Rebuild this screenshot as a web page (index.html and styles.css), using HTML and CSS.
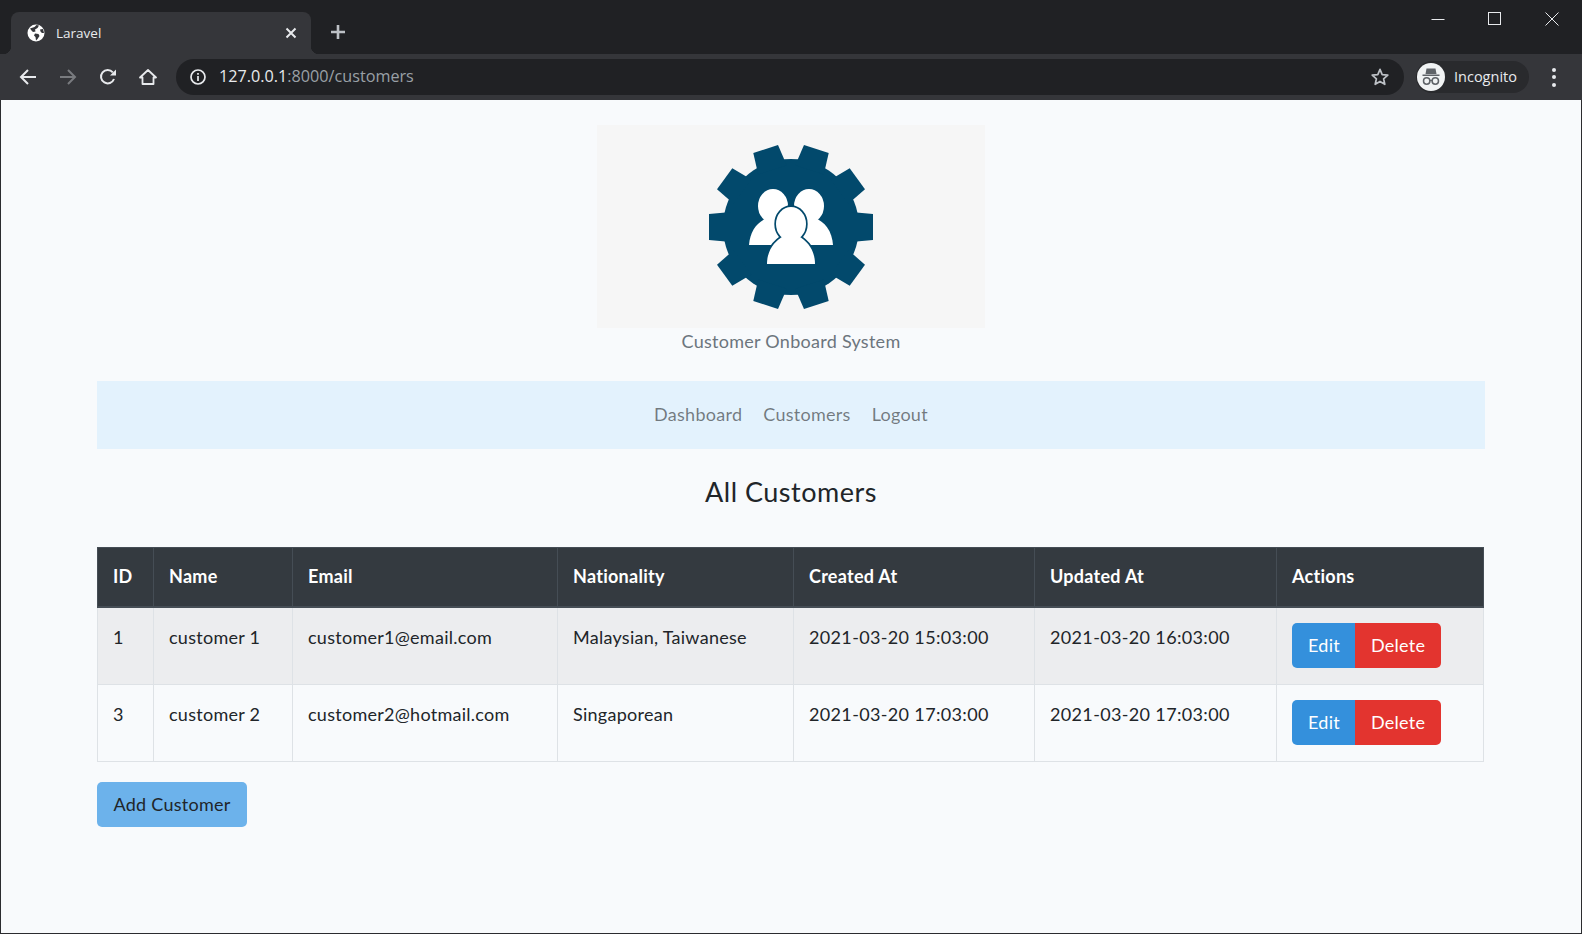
FILE: index.html
```html
<!DOCTYPE html>
<html lang="en">
<head>
    <meta charset="UTF-8">
    <title>Laravel</title>
    <link rel="stylesheet" href="styles.css">
</head>
<body>
<div class="window">

    <div class="tabstrip">
        <div class="tab">
            <svg class="globe" width="18" height="18" viewBox="0 0 18 18">
                <circle cx="9" cy="9" r="8.5" fill="#fff"/>
                <path d="M3 4.5 L7.5 3 L9.5 1 L12 1.5 L10.5 4 L8 5.5 L8.5 7.5 L6 8 L4.5 6.5 Z M8 9.5 L11.5 10 L12.5 12 L10.5 15 L9 16.5 L8.5 13 L7 11.5 Z M13 5.5 L16 5 L17 9 L15 9 L13.5 7.5 Z" fill="#35363a"/>
            </svg>
            <span class="tab-title">Laravel</span>
            <svg class="tab-close" width="12" height="12" viewBox="0 0 12 12">
                <path d="M1.5 1.5 L10.5 10.5 M10.5 1.5 L1.5 10.5" stroke="#e8eaed" stroke-width="2"/>
            </svg>
        </div>
        <svg class="newtab" width="16" height="16" viewBox="0 0 16 16">
            <path d="M8 1 V15 M1 8 H15" stroke="#bdc1c6" stroke-width="2.6"/>
        </svg>
        <div class="spacer"></div>
        <div class="winbtn">
            <svg width="14" height="14" viewBox="0 0 14 14"><path d="M0.5 7.5 H13.5" stroke="#e8eaed" stroke-width="1"/></svg>
        </div>
        <div class="winbtn">
            <svg width="14" height="14" viewBox="0 0 14 14"><rect x="0.5" y="0.5" width="12" height="12" fill="none" stroke="#e8eaed" stroke-width="1"/></svg>
        </div>
        <div class="winbtn">
            <svg width="14" height="14" viewBox="0 0 14 14"><path d="M0.5 0.5 L13.5 13.5 M13.5 0.5 L0.5 13.5" stroke="#e8eaed" stroke-width="1"/></svg>
        </div>
    </div>

    <div class="toolbar">
        <div class="toolbtn">
            <svg width="18" height="18" viewBox="0 0 18 18"><path d="M17 9 H2 M9 2 L2 9 L9 16" fill="none" stroke="#e8eaed" stroke-width="2"/></svg>
        </div>
        <div class="toolbtn">
            <svg width="18" height="18" viewBox="0 0 18 18"><path d="M1 9 H16 M9 2 L16 9 L9 16" fill="none" stroke="#797b7f" stroke-width="2"/></svg>
        </div>
        <div class="toolbtn">
            <svg width="18" height="18" viewBox="0 0 18 18">
                <path d="M15 11 A6.7 6.7 0 1 1 13.8 4.3" fill="none" stroke="#e8eaed" stroke-width="2"/>
                <path d="M11 7.5 H17 V1.5 Z" fill="#e8eaed"/>
            </svg>
        </div>
        <div class="toolbtn">
            <svg width="18" height="18" viewBox="0 0 18 18"><path d="M9 2 L17 9.5 H14.5 V16 H3.5 V9.5 H1 Z" fill="none" stroke="#e8eaed" stroke-width="1.8" stroke-linejoin="round"/></svg>
        </div>
        <div class="omnibox">
            <svg class="info" width="16" height="16" viewBox="0 0 16 16">
                <circle cx="8" cy="8" r="7" fill="none" stroke="#e8eaed" stroke-width="1.7"/>
                <path d="M8 7 V12 M8 4 V5.8" stroke="#e8eaed" stroke-width="1.7"/>
            </svg>
            <span class="url"><span class="url-host">127.0.0.1</span>:8000/customers</span>
            <svg class="star" width="20" height="20" viewBox="0 0 20 20">
                <path d="M10 2.4 L12.2 7.6 L17.8 8.1 L13.6 11.8 L14.8 17.3 L10 14.4 L5.2 17.3 L6.4 11.8 L2.2 8.1 L7.8 7.6 Z" fill="none" stroke="#bdc1c6" stroke-width="1.7" stroke-linejoin="round"/>
            </svg>
        </div>
        <div class="profile">
            <div class="avatar">
                <svg width="24" height="24" viewBox="0 0 24 24">
                    <path d="M7.5 3.5 H16.5 L17.5 9 H6.5 Z M3.5 9.5 H20.5 V11 H3.5 Z" fill="#5f6368"/>
                    <circle cx="7.7" cy="16" r="3.2" fill="none" stroke="#5f6368" stroke-width="1.5"/>
                    <circle cx="16.3" cy="16" r="3.2" fill="none" stroke="#5f6368" stroke-width="1.5"/>
                    <path d="M10.8 15.5 H13.2" stroke="#5f6368" stroke-width="1.3"/>
                </svg>
            </div>
            <span class="profile-name">Incognito</span>
        </div>
        <div class="menu-dots">
            <span></span><span></span><span></span>
        </div>
    </div>

    <div class="page">
        <div class="brand">
            <div class="logo">
                <svg width="164" height="164" viewBox="-82 -82 164 164">
                    <defs>
                        <polygon id="tooth" points="60,-15 82,-13 82,13 60,15"/>
                    </defs>
                    <g fill="#02496c">
                        <circle r="68"/>
                        <use href="#tooth"/>
                        <use href="#tooth" transform="rotate(36)"/>
                        <use href="#tooth" transform="rotate(72)"/>
                        <use href="#tooth" transform="rotate(108)"/>
                        <use href="#tooth" transform="rotate(144)"/>
                        <use href="#tooth" transform="rotate(180)"/>
                        <use href="#tooth" transform="rotate(216)"/>
                        <use href="#tooth" transform="rotate(252)"/>
                        <use href="#tooth" transform="rotate(288)"/>
                        <use href="#tooth" transform="rotate(324)"/>
                    </g>
                    <g fill="#fff">
                        <ellipse cx="-18" cy="-21" rx="15" ry="17"/>
                        <ellipse cx="18" cy="-21" rx="15" ry="17"/>
                        <path d="M-42 18 C-41 4 -34 -5 -24 -9 H-12 C-2 -5 5 4 6 18 Z"/>
                        <path d="M42 18 C41 4 34 -5 24 -9 H12 C2 -5 -5 4 -6 18 Z"/>
                    </g>
                    <g fill="#02496c" stroke="#02496c" stroke-width="3.4">
                        <ellipse cx="0" cy="-3" rx="15" ry="17"/>
                        <path d="M-24 37 C-24 24 -17 14 -7 9 H7 C17 14 24 24 24 37 Z"/>
                    </g>
                    <g fill="#fff">
                        <ellipse cx="0" cy="-3" rx="15" ry="17"/>
                        <path d="M-24 37 C-24 24 -17 14 -7 9 H7 C17 14 24 24 24 37 Z"/>
                    </g>
                </svg>
            </div>
            <div class="tagline">Customer Onboard System</div>
        </div>

        <nav class="navbar">
            <a class="nav-link" href="#">Dashboard</a>
            <a class="nav-link" href="#">Customers</a>
            <a class="nav-link" href="#">Logout</a>
        </nav>

        <h3 class="page-title">All Customers</h3>

        <table class="table">
            <colgroup>
                <col class="col-id">
                <col class="col-name">
                <col class="col-email">
                <col class="col-nation">
                <col class="col-date">
                <col class="col-date2">
                <col>
            </colgroup>
            <thead>
                <tr>
                    <th>ID</th>
                    <th>Name</th>
                    <th>Email</th>
                    <th>Nationality</th>
                    <th>Created At</th>
                    <th>Updated At</th>
                    <th>Actions</th>
                </tr>
            </thead>
            <tbody>
                <tr class="odd">
                    <td>1</td>
                    <td>customer 1</td>
                    <td>customer1@email.com</td>
                    <td>Malaysian, Taiwanese</td>
                    <td class="date">2021-03-20 15:03:00</td>
                    <td class="date">2021-03-20 16:03:00</td>
                    <td>
                        <div class="btn-group">
                            <a class="btn btn-edit" href="#">Edit</a>
                            <a class="btn btn-delete" href="#">Delete</a>
                        </div>
                    </td>
                </tr>
                <tr>
                    <td>3</td>
                    <td>customer 2</td>
                    <td>customer2@hotmail.com</td>
                    <td>Singaporean</td>
                    <td class="date">2021-03-20 17:03:00</td>
                    <td class="date">2021-03-20 17:03:00</td>
                    <td>
                        <div class="btn-group">
                            <a class="btn btn-edit" href="#">Edit</a>
                            <a class="btn btn-delete" href="#">Delete</a>
                        </div>
                    </td>
                </tr>
            </tbody>
        </table>

        <a class="btn btn-add" href="#">Add Customer</a>
    </div>
</div>
</body>
</html>
```

FILE: styles.css
```css
* {
    box-sizing: border-box;
}
body {
    margin: 0;
    font-family: Lato, "Noto Sans", sans-serif;
    font-size: 18px;
    line-height: 1.6;
    letter-spacing: 0.27px;
    color: #212529;
}
a {
    text-decoration: none;
}
.window {
    height: 934px;
    display: flex;
    flex-direction: column;
    overflow: hidden;
}

/* browser chrome */
.tabstrip {
    height: 54px;
    flex: none;
    display: flex;
    align-items: flex-start;
    padding: 0 2px 0 11px;
    letter-spacing: 0;
    background: #202124;
}
.tab {
    position: relative;
    width: 300px;
    height: 42px;
    margin-top: 12px;
    padding: 0 14px 0 16px;
    display: flex;
    align-items: center;
    background: #35363a;
    border-radius: 8px 8px 0 0;
}
.tab::before,
.tab::after {
    content: "";
    position: absolute;
    bottom: 0;
    width: 8px;
    height: 8px;
}
.tab::before {
    left: -8px;
    background: radial-gradient(circle at 0 0, #202124 8px, #35363a 8.5px);
}
.tab::after {
    right: -8px;
    background: radial-gradient(circle at 100% 0, #202124 8px, #35363a 8.5px);
}
.globe {
    flex: none;
}
.tab-title {
    flex: 1;
    margin-left: 11px;
    font-family: "Open Sans", sans-serif;
    font-size: 13.5px;
    line-height: 18px;
    color: #e8eaed;
}
.newtab {
    margin: 24px 0 0 19px;
}
.spacer {
    flex: 1;
}
.winbtn {
    width: 57px;
    height: 38px;
    display: flex;
    align-items: center;
    justify-content: center;
}
.toolbar {
    height: 46px;
    flex: none;
    display: flex;
    align-items: center;
    padding: 0 4px 0 8px;
    letter-spacing: 0;
    background: #35363a;
}
.toolbtn {
    width: 40px;
    height: 36px;
    display: flex;
    align-items: center;
    justify-content: center;
}
.omnibox {
    flex: 1;
    height: 36px;
    margin-left: 8px;
    padding: 0 14px;
    display: flex;
    align-items: center;
    background: #202124;
    border-radius: 18px;
}
.url {
    flex: 1;
    margin-left: 13px;
    font-family: "Open Sans", sans-serif;
    font-size: 16.2px;
    color: #9aa0a6;
}
.url-host {
    color: #e8eaed;
}
.profile {
    width: 113px;
    height: 32px;
    margin-left: 12px;
    padding-left: 1px;
    display: flex;
    align-items: center;
    background: #292a2d;
    border-radius: 16px;
}
.avatar {
    width: 28px;
    height: 28px;
    display: flex;
    align-items: center;
    justify-content: center;
    background: #f1f3f4;
    border-radius: 50%;
}
.profile-name {
    margin-left: 9px;
    font-family: "Open Sans", sans-serif;
    font-size: 14.5px;
    color: #e8eaed;
}
.menu-dots {
    width: 49px;
    display: flex;
    flex-direction: column;
    align-items: center;
    gap: 3.5px;
}
.menu-dots span {
    width: 4px;
    height: 4px;
    background: #e8eaed;
    border-radius: 50%;
}

/* page */
.page {
    flex: 1;
    padding: 25px 96px 0;
    background: #f8fafc;
    border: 1px solid #2b2c2f;
    border-top: none;
}
.brand {
    text-align: center;
}
.logo {
    width: 388px;
    height: 203px;
    margin: 0 auto;
    display: flex;
    align-items: center;
    justify-content: center;
    background: #f6f6f6;
}
.tagline {
    margin-top: -1px;
    color: #6c757d;
}
.navbar {
    height: 68px;
    margin-top: 25px;
    display: flex;
    align-items: center;
    justify-content: center;
    background: #e3f2fd;
}
.nav-link {
    padding: 0 10.5px;
    color: rgba(0, 0, 0, 0.5);
}
.page-title {
    margin: 27px 0 39px;
    font-size: 27px;
    font-weight: 400;
    line-height: 32px;
    letter-spacing: 0.5px;
    text-align: center;
}
.table {
    width: 1387px;
    table-layout: fixed;
    border-collapse: collapse;
}
.col-id { width: 56px; }
.col-name { width: 139px; }
.col-email { width: 265px; }
.col-nation { width: 236px; }
.col-date { width: 241px; }
.col-date2 { width: 242px; }
.table th,
.table td {
    padding: 15px 15px 16px;
    text-align: left;
    vertical-align: top;
    border: 1px solid #dee2e6;
}
.table th {
    padding: 14.5px 15px;
    font-weight: 700;
    color: #fff;
    background: #343a40;
    border-color: #454d55;
    border-bottom-width: 2px;
}
.table .date {
    letter-spacing: 0.35px;
}
.odd td {
    background: #ecedef;
}
.btn-group {
    display: flex;
}
.btn {
    display: inline-block;
    padding: 8px 16px;
    line-height: 29px;
    border-radius: 5px;
}
.btn-edit {
    padding-right: 15px;
    color: #fff;
    background: #3490dc;
    border-radius: 5px 0 0 5px;
}
.btn-delete {
    color: #fff;
    background: #e3342f;
    border-radius: 0 5px 5px 0;
}
.btn-add {
    margin-top: 20px;
    padding: 8px 16.5px;
    color: #212529;
    background: #6cb2eb;
}
```
